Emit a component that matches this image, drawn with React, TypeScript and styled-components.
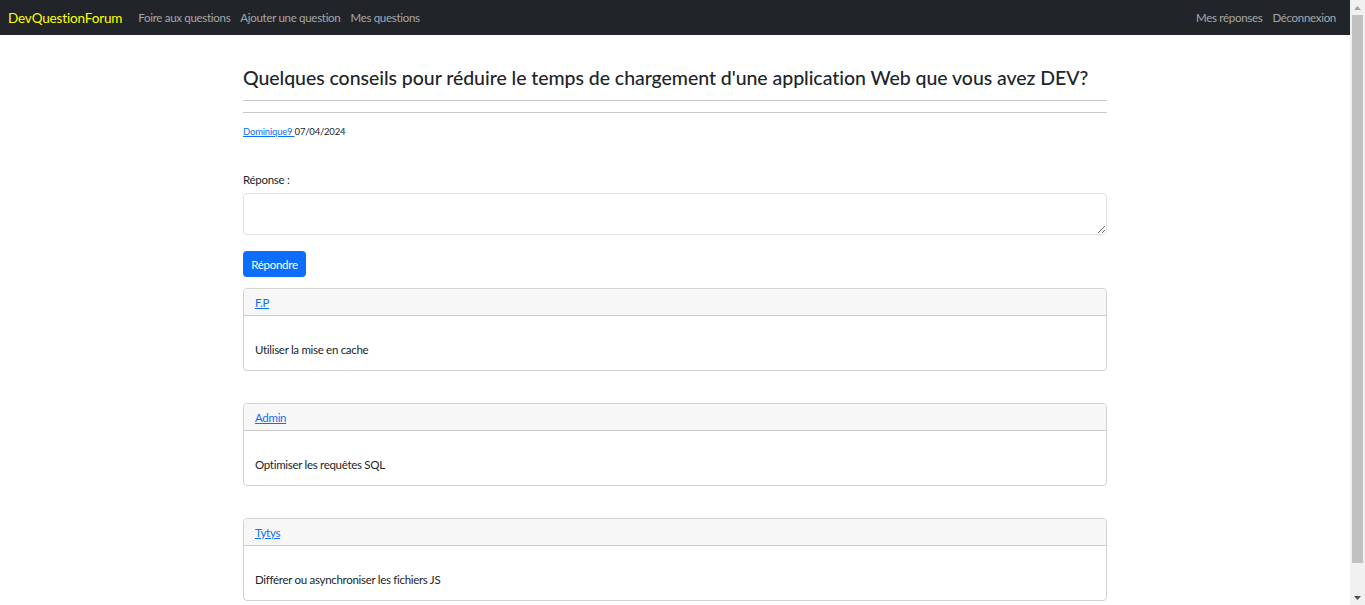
import styled, { createGlobalStyle } from 'styled-components';

const Global = createGlobalStyle`
  html, body {
    margin: 0;
    padding: 0;
    background: #fff;
    color: #212529;
    font-family: Lato, 'Noto Sans', sans-serif;
  }
  * { box-sizing: border-box; }
`;

const Shell = styled.div`
  display: flex;
  height: 605px;
  overflow: hidden;
`;

const Page = styled.div`
  flex: 1;
  min-width: 0;
  overflow: hidden;
`;

const ScrollTrack = styled.div`
  width: 15px;
  flex: none;
  background: #f1f1f1;
  display: flex;
  flex-direction: column;
  align-items: center;
`;

const ScrollArrow = styled.div<{ $bottom?: boolean }>`
  height: 15px;
  margin-top: ${(p) => (p.$bottom ? 'auto' : '0')};
  display: flex;
  align-items: center;
  justify-content: center;
`;

const ScrollThumb = styled.div`
  width: 11px;
  height: 548px;
  background: #c1c1c1;
`;

const Navbar = styled.nav`
  height: 35px;
  background: #212529;
  display: flex;
  align-items: center;
  padding: 0 8px;
  font-size: 11.5px;
  letter-spacing: -0.3px;
`;

const Brand = styled.a`
  color: #ffff00;
  font-size: 13.5px;
  letter-spacing: -0.15px;
  margin-right: 16px;
  text-decoration: none;
`;

const NavGroup = styled.div<{ $end?: boolean }>`
  display: flex;
  gap: 10px;
  margin-left: ${(p) => (p.$end ? 'auto' : '0')};
  margin-right: ${(p) => (p.$end ? '6px' : '0')};
`;

const NavLink = styled.a`
  color: rgba(255, 255, 255, 0.6);
  text-decoration: none;
`;

const Container = styled.main`
  width: 864px;
  margin: 0 auto;
  padding-top: 31px;
  padding-bottom: 32px;
  font-size: 11.5px;
  letter-spacing: -0.3px;
`;

const Title = styled.h3`
  margin: 0;
  font-size: 19.5px;
  font-weight: 500;
  line-height: 24px;
  letter-spacing: -0.05px;
  white-space: nowrap;
`;

const Rule = styled.hr<{ $top: number }>`
  margin: ${(p) => p.$top}px 0 0;
  border: 0;
  border-top: 1px solid #c8c9ca;
`;

const Meta = styled.div`
  margin-top: 12px;
  font-size: 9.5px;
  letter-spacing: -0.2px;
  line-height: 14px;
`;

const Link = styled.a`
  color: #0d6efd;
  text-decoration: underline;
`;

const Label = styled.label`
  display: block;
  margin-top: 33px;
  line-height: 16px;
`;

const TextArea = styled.textarea`
  display: block;
  width: 100%;
  height: 42px;
  margin-top: 5px;
  border: 1px solid #dee2e6;
  border-radius: 4px;
  font: inherit;
`;

const Button = styled.button`
  margin-top: 16px;
  height: 26px;
  width: 63px;
  padding: 0;
  border: 0;
  border-radius: 4px;
  background: #0d6efd;
  color: #fff;
  font-family: inherit;
  font-size: 11.5px;
  letter-spacing: -0.3px;
`;

const Card = styled.section<{ $first?: boolean }>`
  margin-top: ${(p) => (p.$first ? '11px' : '32px')};
  border: 1px solid rgba(0, 0, 0, 0.175);
  border-radius: 4px;
  overflow: hidden;
`;

const CardHeader = styled.div`
  height: 27px;
  padding: 0 11px;
  display: flex;
  align-items: center;
  background: #f7f7f7;
  border-bottom: 1px solid rgba(0, 0, 0, 0.175);
`;

const CardBody = styled.div`
  padding: 25px 11px 11px;
  line-height: 18px;
`;

const answers = [
  { user: 'F.P', text: 'Utiliser la mise en cache' },
  { user: 'Admin', text: 'Optimiser les requêtes SQL' },
  { user: 'Tytys', text: 'Différer ou asynchroniser les fichiers JS' },
];

const Arrow = ({ down }: { down?: boolean }) => (
  <svg width="7" height="4" viewBox="0 0 7 4">
    <path
      d={down ? 'M0 0H7L3.5 4Z' : 'M0 4H7L3.5 0Z'}
      fill={down ? '#505050' : '#a3a3a3'}
    />
  </svg>
);

export default function App() {
  return (
    <Shell>
      <Global />
      <Page>
        <Navbar>
          <Brand href="#">DevQuestionForum</Brand>
          <NavGroup>
            <NavLink href="#">Foire aux questions</NavLink>
            <NavLink href="#">Ajouter une question</NavLink>
            <NavLink href="#">Mes questions</NavLink>
          </NavGroup>
          <NavGroup $end>
            <NavLink href="#">Mes réponses</NavLink>
            <NavLink href="#">Déconnexion</NavLink>
          </NavGroup>
        </Navbar>
        <Container>
          <Title>
            Quelques conseils pour réduire le temps de chargement d'une application Web que vous avez DEV?
          </Title>
          <Rule $top={10} />
          <Rule $top={11} />
          <Meta>
            <Link href="#">Dominique9 </Link>07/04/2024
          </Meta>
          <Label htmlFor="reponse">Réponse :</Label>
          <TextArea id="reponse" />
          <Button>Répondre</Button>
          {answers.map((a, i) => (
            <Card key={a.user} $first={i === 0}>
              <CardHeader>
                <Link href="#">{a.user}</Link>
              </CardHeader>
              <CardBody>{a.text}</CardBody>
            </Card>
          ))}
        </Container>
      </Page>
      <ScrollTrack>
        <ScrollArrow>
          <Arrow />
        </ScrollArrow>
        <ScrollThumb />
        <ScrollArrow $bottom>
          <Arrow down />
        </ScrollArrow>
      </ScrollTrack>
    </Shell>
  );
}
